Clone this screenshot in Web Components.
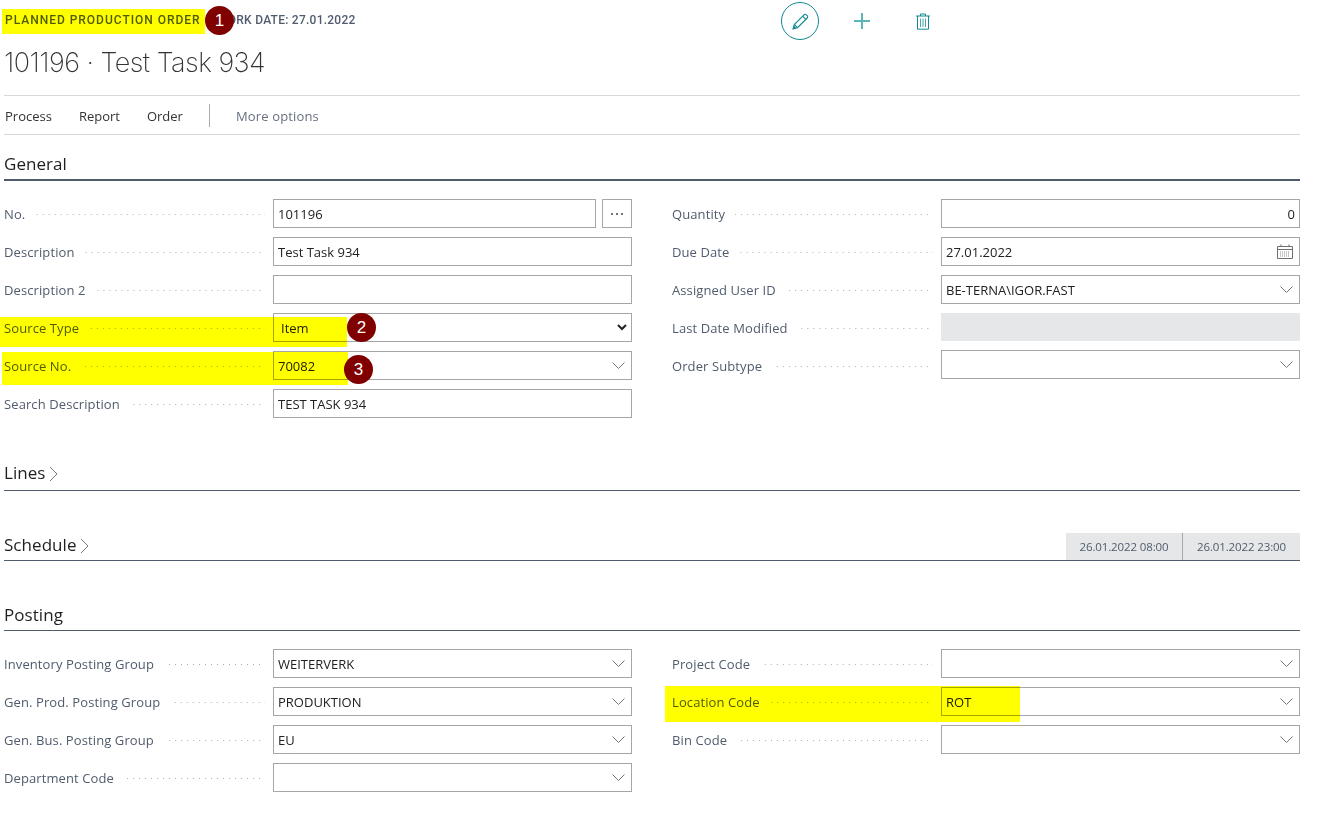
<!DOCTYPE html>
<html lang="en"><head><meta charset="utf-8"><title>Planned Production Order</title>
<style>
html,body{margin:0;padding:0;background:#fff}
body{font-family:"Open Sans","Liberation Sans",sans-serif;font-size:13px;color:#212121}
</style></head><body>
<template id="t-page"><style>
:host{display:block;position:relative;width:1329px;height:831px;overflow:hidden;box-sizing:border-box;padding-left:4px}
.wrap{width:1296px}
</style><div class="wrap"><slot></slot></div><slot name="overlay"></slot></template>

<template id="t-header"><style>
:host{display:block;height:95px}
.top{display:flex;height:42px;align-items:center}
.cap{flex:0 0 777px;display:flex;font:500 12px/16px Roboto,"Liberation Sans",sans-serif;color:#505c6d;margin-top:-2px;white-space:nowrap;margin-left:1px;margin-right:-1px}
::slotted([slot=caption]){letter-spacing:.98px}
::slotted([slot=sep]){margin:0 6px 0 7px}
::slotted([slot=date]){letter-spacing:.25px}
.act{display:flex;align-items:center}
.edit{width:38px;height:38px;box-sizing:border-box;border:1.5px solid #0f8a8f;border-radius:50%;display:flex;align-items:center;justify-content:center}
.plus{margin-left:35px;display:flex}
.trash{margin-left:46px;display:flex}
h1{margin:1px 0 0;font:200 27px/40px Inter,"Liberation Sans",sans-serif;letter-spacing:-.53px;color:#333;height:40px}
</style>
<div class="top"><div class="cap"><slot name="caption"></slot><slot name="sep"></slot><slot name="date"></slot></div>
<div class="act">
<div class="edit"><svg width="17" height="17" viewBox="0 0 17 17" fill="none" stroke="#0f8a8f" stroke-width="1.1"><path d="M1.2 15.8l1.1-4.3L12 1.8a1.6 1.6 0 0 1 2.3 0l.9.9a1.6 1.6 0 0 1 0 2.3L5.5 14.7z"/><path d="M2.3 11.5l3.2 3.2M10.6 3.2l3.2 3.2"/><path d="M1.2 15.8l.6-2.2 1.6 1.6z" fill="#0f8a8f"/></svg></div>
<div class="plus"><svg width="16" height="16" viewBox="0 0 16 16" stroke="#5fb4b7" stroke-width="2"><path d="M0 8h16M8 0v16"/></svg></div>
<div class="trash"><svg width="14" height="17" viewBox="0 0 14 17" fill="none" stroke="#0f8a8f" stroke-width="1"><path d="M0 3h14M4.5 3V1h5v2M1.5 3v13.2h11V3"/><path d="M4.5 5.5v8.5M7 5.5v8.5M9.5 5.5v8.5" stroke-opacity=".75"/></svg></div>
</div></div>
<h1><slot></slot></h1></template>

<template id="t-menu"><style>
:host{display:flex;align-items:center;height:37px;padding-top:1px;border-top:1px solid #d6d7da;border-bottom:1px solid #d6d7da;font-size:13px;color:#333;box-sizing:content-box}
::slotted(span){margin-left:1px;margin-right:26px}
.sep{width:1px;height:23px;background:#a9adb3;margin:-1px 25px 0 0}
.more{color:#66717f;letter-spacing:.15px}
</style><slot></slot><div class="sep"></div><div class="more"><slot name="more"></slot></div></template>

<template id="t-tab"><style>
:host{display:block}
.head{display:flex;justify-content:space-between;align-items:flex-end;border-bottom:var(--rule,1px) solid var(--rulec,#505c6d);margin-top:var(--top,42px)}
.ttl{display:flex;align-items:center;font:500 17px/24px "Open Sans","Liberation Sans",sans-serif;letter-spacing:.05px;color:#1f1f1f;padding-bottom:var(--pb,3px)}
svg{margin-left:3px;margin-top:2px;display:none}
:host([collapsed]) svg{display:block}
.body{display:grid;grid-template-columns:628px 628px;column-gap:40px;margin-top:18px}
:host([collapsed]) .body{display:none}
.col{display:flex;flex-direction:column;gap:9px;align-items:stretch}
</style><div class="head"><div class="ttl"><span id="t"></span><svg width="9" height="16" viewBox="0 0 9 16" fill="none" stroke="#77797d" stroke-width="1"><path d="M1 1l7 7-7 7"/></svg></div><slot name="aside"></slot></div>
<div class="body"><div class="col"><slot name="left"></slot></div><div class="col"><slot name="right"></slot></div></div></template>

<template id="t-field"><style>
:host{display:flex;align-items:center;height:29px;font-size:13px}
.lab{flex:0 0 auto;color:#505c6d;white-space:nowrap;letter-spacing:.1px}
.dots{flex:1;height:1px;margin:2px 8px 0 10px;background-image:linear-gradient(to right,#a9adb3 1px,transparent 1px);background-size:6px 1px;background-position:right center;background-repeat:repeat-x}
.row{flex:0 0 359px;display:flex;gap:6px;height:100%;box-sizing:border-box}
.box{flex:1;box-sizing:border-box;height:100%;border:1px solid #a6a6a6;display:flex;align-items:center;justify-content:space-between;padding:0 6px 0 4px;color:#212121;white-space:nowrap;background:#fff}
:host([kind=number]) .box{justify-content:flex-end;padding-right:4px}
:host([kind=select]) .box{padding-left:7px}
:host([kind=date]) .box{padding-right:6px}
:host([kind=disabled]) .row{height:28px;align-self:flex-start}
:host([kind=disabled]) .box{background:#e6e7e8;border:none}
:host([raised]) .row{align-self:flex-start;margin-top:-1px}
.btn{flex:0 0 30px;box-sizing:border-box;border:1px solid #a6a6a6;display:flex;align-items:center;justify-content:center}
</style><span class="lab"></span><span class="dots"></span><div class="row"><div class="box"><span class="val"></span><span class="ico"></span></div></div></template>

<template id="t-stamp"><style>
:host{display:flex;height:27px;background:#e6e7e8;font-size:11.5px;letter-spacing:-.12px;color:#505c6d}
::slotted(span){display:flex;align-items:center;justify-content:center;box-sizing:border-box;width:117px}
::slotted(span:first-child){border-right:1px solid #a6a9ad;width:117px}
</style><slot></slot></template>

<template id="t-hl"><style>
:host{display:block;position:absolute;background:#ffff00;mix-blend-mode:multiply;left:var(--x);top:var(--y);width:var(--w);height:var(--h)}
</style></template>
<template id="t-badge"><style>
:host{position:absolute;left:var(--x);top:var(--y);width:29px;height:29px;border-radius:50%;background:#800000;color:#fff;display:flex;align-items:center;justify-content:center;font:17px/1 "Liberation Sans",sans-serif}
</style><slot></slot></template>

<bc-page>
<bc-header><span slot="caption">PLANNED PRODUCTION ORDER</span><span slot="sep">∙</span><span slot="date">WORK DATE: 27.01.2022</span>101196 · Test Task 934</bc-header>
<bc-menu><span>Process</span><span>Report</span><span>Order</span><span slot="more">More options</span></bc-menu>

<bc-tab title="General" style="--top:17px;--rule:2px">
<bc-field slot="left" label="No." value="101196" kind="assist"></bc-field>
<bc-field slot="left" label="Description" value="Test Task 934"></bc-field>
<bc-field slot="left" label="Description 2"></bc-field>
<bc-field slot="left" label="Source Type" value="Item" kind="select"></bc-field>
<bc-field slot="left" label="Source No." value="70082" kind="lookup"></bc-field>
<bc-field slot="left" label="Search Description" value="TEST TASK 934"></bc-field>
<bc-field slot="right" label="Quantity" value="0" kind="number"></bc-field>
<bc-field slot="right" label="Due Date" value="27.01.2022" kind="date"></bc-field>
<bc-field slot="right" label="Assigned User ID" value="BE-TERNA\IGOR.FAST" kind="lookup"></bc-field>
<bc-field slot="right" label="Last Date Modified" kind="disabled"></bc-field>
<bc-field slot="right" label="Order Subtype" kind="lookup" raised></bc-field>
</bc-tab>

<bc-tab title="Lines" collapsed style="--top:43px;--pb:5px"></bc-tab>
<bc-tab title="Schedule" collapsed><bc-stamp slot="aside"><span>26.01.2022 08:00</span><span>26.01.2022 23:00</span></bc-stamp></bc-tab>

<bc-tab title="Posting">
<bc-field slot="left" label="Inventory Posting Group" value="WEITERVERK" kind="lookup"></bc-field>
<bc-field slot="left" label="Gen. Prod. Posting Group" value="PRODUKTION" kind="lookup"></bc-field>
<bc-field slot="left" label="Gen. Bus. Posting Group" value="EU" kind="lookup"></bc-field>
<bc-field slot="left" label="Department Code" kind="lookup"></bc-field>
<bc-field slot="right" label="Project Code" kind="lookup"></bc-field>
<bc-field slot="right" label="Location Code" value="ROT" kind="lookup"></bc-field>
<bc-field slot="right" label="Bin Code" kind="lookup"></bc-field>
</bc-tab>

<bc-hl slot="overlay" style="--x:2px;--y:9px;--w:203px;--h:25px"></bc-hl>
<bc-hl slot="overlay" style="--x:0px;--y:317px;--w:347px;--h:30px"></bc-hl>
<bc-hl slot="overlay" style="--x:2px;--y:352px;--w:346px;--h:33px"></bc-hl>
<bc-hl slot="overlay" style="--x:665px;--y:686px;--w:355px;--h:36px"></bc-hl>
<bc-badge slot="overlay" style="--x:205px;--y:6px">1</bc-badge>
<bc-badge slot="overlay" style="--x:347px;--y:313px">2</bc-badge>
<bc-badge slot="overlay" style="--x:344px;--y:355px">3</bc-badge>
</bc-page>

<script>
function stamp(el,id){const r=el.attachShadow({mode:'open'});r.appendChild(document.getElementById(id).content.cloneNode(true));return r;}
const simple={'bc-page':'t-page','bc-header':'t-header','bc-menu':'t-menu','bc-stamp':'t-stamp','bc-hl':'t-hl','bc-badge':'t-badge'};
for(const [n,id] of Object.entries(simple)){customElements.define(n,class extends HTMLElement{constructor(){super();stamp(this,id);}});}
customElements.define('bc-tab',class extends HTMLElement{connectedCallback(){if(this.shadowRoot)return;const r=stamp(this,'t-tab');r.getElementById('t').textContent=this.getAttribute('title');this.removeAttribute('title');}});
const icons={
lookup:'<svg width="13" height="7" viewBox="0 0 13 7" fill="none" stroke="#767676" stroke-width="1" style="display:block"><path d="M.5.5l6 6 6-6"/></svg>',
select:'<svg width="10" height="7" viewBox="0 0 10 7" fill="none" stroke="#222" stroke-width="2" style="display:block;margin-right:-2px"><path d="M1 1l4 4 4-4"/></svg>',
date:'<svg width="16" height="15" viewBox="0 0 16 15" fill="none" stroke="#6f6f6f" stroke-width="1" style="display:block"><path d="M.5 2.5h15v12H.5zM.5 5.5h15M4 .5v2M12 .5v2"/><path d="M3 8h10M3 10h10M3 12h10" stroke-dasharray="1 1" stroke="#8a8a8a"/></svg>'};
customElements.define('bc-field',class extends HTMLElement{connectedCallback(){if(this.shadowRoot)return;const r=stamp(this,'t-field');
r.querySelector('.lab').textContent=this.getAttribute('label');
r.querySelector('.val').textContent=this.getAttribute('value')||'';
const k=this.getAttribute('kind');
if(icons[k])r.querySelector('.ico').innerHTML=icons[k];
if(k==='assist'){const b=document.createElement('div');b.className='btn';b.innerHTML='<svg width="12" height="2" viewBox="0 0 12 2" fill="#444" style="display:block"><rect x="0" width="2" height="2" rx="1"/><rect x="5" width="2" height="2" rx="1"/><rect x="10" width="2" height="2" rx="1"/></svg>';r.querySelector('.row').appendChild(b);}
}});
</script>
</body></html>
